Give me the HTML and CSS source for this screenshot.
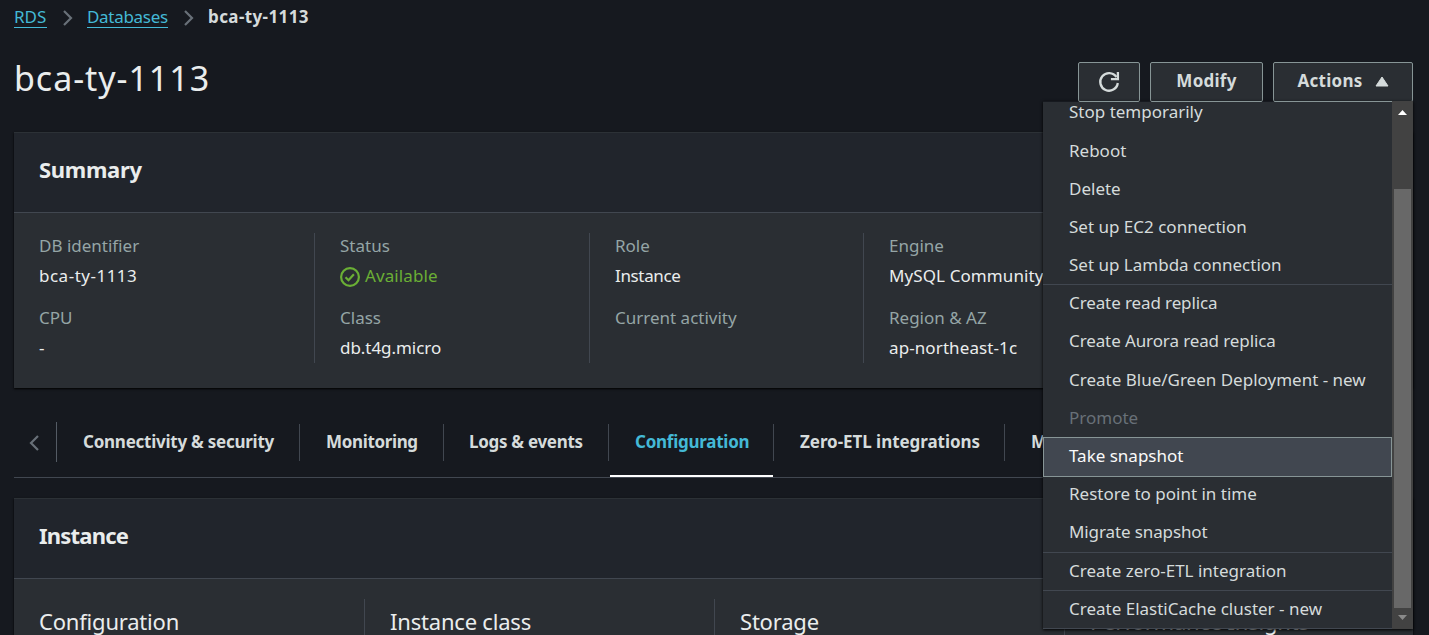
FILE: index.html
```html
<!DOCTYPE html>
<html lang="en">
<head>
<meta charset="utf-8">
<title>bca-ty-1113</title>
<link rel="stylesheet" href="styles.css">
</head>
<body>
<nav class="crumbs">
  <a class="crumb crumb-rds">RDS</a>
  <svg class="chev" viewBox="0 0 10 16"><path d="M1 1l7 7-7 7"/></svg>
  <a class="crumb crumb-db">Databases</a>
  <svg class="chev" viewBox="0 0 10 16"><path d="M1 1l7 7-7 7"/></svg>
  <span class="crumb-current">bca-ty-1113</span>
</nav>
<header class="page-head">
  <h1 class="title">bca-ty-1113</h1>
  <div class="buttons">
    <button class="btn btn-refresh"><svg class="refresh" viewBox="0 0 22 22"><path d="M19.8 12A8.8 8.8 0 1 1 18.4 6"/><path d="M19.9 1v7.2h-7"/></svg></button>
    <button class="btn btn-modify">Modify</button>
    <div class="dropdown">
      <button class="btn btn-actions">Actions<svg class="caret" viewBox="0 0 14 11"><path d="M7 1L13 10H1z"/></svg></button>
      <div class="menu">
        <ul class="items">
          <li class="item">Stop temporarily</li>
          <li class="item">Reboot</li>
          <li class="item">Delete</li>
          <li class="item">Set up EC2 connection</li>
          <li class="item divided">Set up Lambda connection</li>
          <li class="item snug">Create read replica</li>
          <li class="item snug">Create Aurora read replica</li>
          <li class="item">Create Blue/Green Deployment - new</li>
          <li class="item disabled">Promote</li>
          <li class="item selected">Take snapshot</li>
          <li class="item">Restore to point in time</li>
          <li class="item divided snug">Migrate snapshot</li>
          <li class="item divided">Create zero-ETL integration</li>
          <li class="item divided">Create ElastiCache cluster - new</li>
        </ul>
        <div class="scrollbar">
          <svg class="arrow arrow-up" viewBox="0 0 9 5"><path d="M4.5 0L9 5H0z"/></svg>
          <div class="thumb"></div>
          <svg class="arrow arrow-down" viewBox="0 0 9 5"><path d="M0 0h9L4.5 5z"/></svg>
        </div>
      </div>
    </div>
  </div>
</header>

<section class="card summary">
  <h2 class="card-head">Summary</h2>
  <div class="card-body">
    <div class="col">
      <div class="label">DB identifier</div><div class="value name">bca-ty-1113</div>
      <div class="label">CPU</div><div class="value">-</div>
    </div>
    <div class="col">
      <div class="label">Status</div>
      <div class="value ok"><svg class="check" viewBox="0 0 20 20"><circle cx="10" cy="10" r="8.9"/><path d="M5.5 10.2l3 3 5.4-6"/></svg>Available</div>
      <div class="label">Class</div><div class="value tight">db.t4g.micro</div>
    </div>
    <div class="col">
      <div class="label">Role</div><div class="value instance-role">Instance</div>
      <div class="label">Current activity</div>
    </div>
    <div class="col">
      <div class="label">Engine</div><div class="value">MySQL Community</div>
      <div class="label">Region &amp; AZ</div><div class="value">ap-northeast-1c</div>
    </div>
  </div>
</section>

<nav class="tabs">
  <div class="tab-prev"><svg class="chev" viewBox="0 0 10 16"><path d="M9 1L2 8l7 7"/></svg></div>
  <a class="tab t1"><span>Connectivity &amp; security</span></a>
  <a class="tab t2"><span>Monitoring</span></a>
  <a class="tab t3"><span>Logs &amp; events</span></a>
  <a class="tab t4 active"><span>Configuration</span></a>
  <a class="tab t5"><span>Zero-ETL integrations</span></a>
  <a class="tab t6"><span>M</span></a>
</nav>

<section class="card instance">
  <h2 class="card-head">Instance</h2>
  <div class="card-body">
    <h3 class="col">Configuration</h3>
    <h3 class="col">Instance class</h3>
    <h3 class="col">Storage</h3>
    <h3 class="col">Performance Insights</h3>
  </div>
</section>
</body>
</html>
```
FILE: styles.css
```css
* { box-sizing: border-box; }
body {
  margin: 0;
  width: 1429px;
  height: 635px;
  overflow: hidden;
  padding: 0 16px 0 14px;
  background: #16191f;
  color: #eaeded;
  font-family: "Noto Sans", sans-serif;
  font-size: 17px;
  line-height: 24px;
}
h1, h2, h3, ul { margin: 0; padding: 0; font-weight: 400; }
.crumbs { display: flex; align-items: center; height: 34px; }
.crumb { color: #44b9d6; border-bottom: 1px solid #44b9d6; line-height: 21px; height: 22px; }
.crumb-rds { width: 33px; }
.crumb-db { width: 81px; letter-spacing: -0.3px; }
.crumb-current { font-weight: 700; color: #d5dbdb; letter-spacing: 0.4px; }
.chev { width: 10px; height: 16px; fill: none; stroke: #687078; stroke-width: 2.2; }
.crumbs .chev { margin: 2px 14px 0 16px; }
.page-head { display: flex; justify-content: space-between; height: 98px; padding-top: 28px; }
.title { font-size: 34px; line-height: 32px; letter-spacing: 0.95px; }
.buttons { display: flex; gap: 10px; }
.btn {
  display: flex; align-items: center; justify-content: center;
  height: 40px; padding: 0 0 3px;
  border: 1px solid #879596; border-radius: 2px;
  background: #2a2e33; color: #d5dbdb;
  font: 700 17px "Noto Sans", sans-serif; letter-spacing: 0.25px;
}
.btn-refresh { width: 62px; padding: 0; }
.btn-modify { width: 113px; }
.btn-actions { width: 140px; padding-left: 1px; }
.refresh { width: 22px; height: 22px; fill: none; stroke: #d5dbdb; stroke-width: 2.3; }
.caret { width: 14px; height: 11px; margin: 2px 0 0 13px; fill: #d5dbdb; stroke: #d5dbdb; stroke-linejoin: round; }
.dropdown { position: relative; height: 40px; }
.menu {
  position: absolute; z-index: 2; top: 39px; right: 0;
  display: flex; width: 370px; height: 528px;
  box-shadow: 0 1px 3px #000;
}
.items {
  display: flex; flex-direction: column; justify-content: flex-end;
  width: 349px; height: 527px; margin-top: 1px; overflow: hidden;
  background: #2a2e33; color: #d5dbdb; list-style: none;
}
.item { flex: none; height: 38.2px; padding-left: 26px; line-height: 35px; }
.snug { letter-spacing: -0.11px; }
.divided { border-bottom: 1px solid #414750; }
.disabled { color: #687078; }
.selected { height: 40px; margin: -1px 0 -0.8px; line-height: 36px; padding-left: 25px; background: #414750; border: 1px solid #879596; color: #fafafa; }
.scrollbar { display: flex; flex-direction: column; align-items: center; width: 21px; background: #424242; }
.arrow-up { fill: #fff; margin-top: 9px; }
.arrow { flex: none; width: 9px; height: 5px; }
.thumb { width: 17px; height: 419px; margin: 74px 0 7px; background: #686868; }
.arrow-down { fill: #8a8a8a; }

.card { background: #2a2e33; border-top: 1px solid #2c3136; box-shadow: 0 1px 2px #000; }
.card-head {
  height: 80px; padding: 0 25px; line-height: 73px;
  background: #21252c; border-bottom: 1px solid #414750;
  font-size: 22px; font-weight: 700; letter-spacing: -0.3px;
}
.card-body { display: grid; padding: 20px 0 0 25px; }
.summary { height: 256px; }
.summary .card-body { grid-template-columns: 275px 275px 274px 275px; }
.summary .col { height: 130px; padding-top: 1px; }
.col + .col { border-left: 1px solid #414750; padding-left: 25px; }
.label { color: #95a5a6; height: 24px; margin-bottom: 6px; }
.value { height: 24px; margin-bottom: 18px; white-space: nowrap; letter-spacing: 0.1px; }
.name { letter-spacing: 0.5px; }
.tight { letter-spacing: -0.05px; }
.instance-role { letter-spacing: -0.35px; }
.ok { display: flex; align-items: center; gap: 5px; color: #6aaf35; }
.check { width: 20px; height: 20px; margin-top: 2px; fill: none; stroke: #6aaf35; stroke-width: 2.2; }

.tabs { display: flex; align-items: flex-start; height: 90px; margin-bottom: 20px; padding-top: 34px; border-bottom: 1px solid #414750; overflow: hidden; }
.tab-prev { width: 43px; height: 40px; padding: 13px 0 0 15px; border-right: 1px solid #545b64; }
.tab-prev .chev { display: block; }
.tab { height: 55px; color: #d5dbdb; font-weight: 700; letter-spacing: -0.25px; white-space: nowrap; }
.tab span { display: block; height: 37px; margin-top: 2px; padding-left: 26px; line-height: 36px; border-right: 1px solid #414750; }
.t1 { width: 243px; }
.t2 { width: 144px; letter-spacing: -0.35px; }
.t3 { width: 165px; letter-spacing: -0.3px; }
.t3 span { padding-left: 25px; }
.t4 { width: 165px; }
.t5 { width: 231px; letter-spacing: -0.05px; }
.t6 { width: 250px; }
.active { color: #44b9d6; background: linear-gradient(#fff, #fff) 1px bottom / 163px 2px no-repeat; }
.instance { height: 137px; }
.instance .card-head { letter-spacing: -0.8px; }
.instance .card-body { grid-template-columns: 325px 350px 350px 349px; height: 56px; overflow: hidden; }
.instance .col { height: 36px; font-size: 22px; line-height: 44px; letter-spacing: -0.2px; }
```
